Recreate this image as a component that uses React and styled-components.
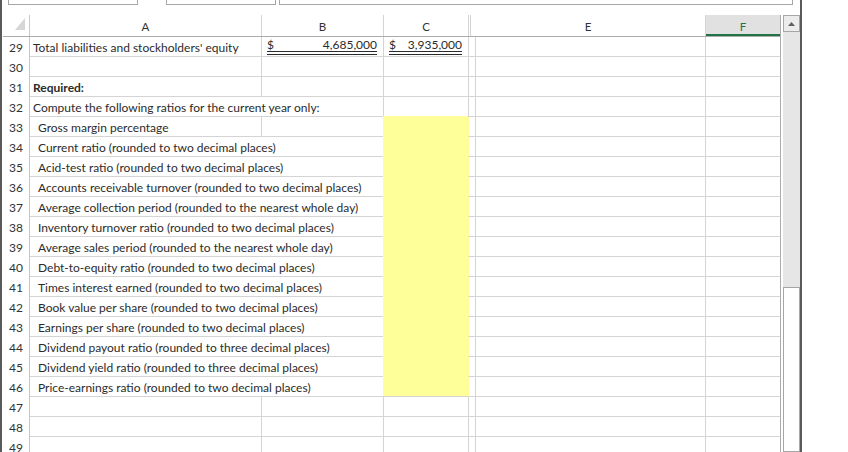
import React from 'react';
import styled, { createGlobalStyle } from 'styled-components';

const GlobalStyle = createGlobalStyle`
  html, body { margin: 0; padding: 0; background: #ffffff; }
  body { font-family: Lato, "Liberation Sans", sans-serif; }
  #root { width: 848px; height: 452px; overflow: hidden; }
`;

const COLS = '27px 232px 122px 85px 2px 235px 75px';
const GRID = '#d4d4d4';
const EDGE = '#ababab';
const YELLOW = '#ffff99';

const Frame = styled.div`
  width: 798px;
  height: 452px;
  border-left: 2px solid #5a5a5a;
  border-right: 2px solid #5a5a5a;
  overflow: hidden;
  display: flex;
  flex-direction: column;
  background: #fff;
`;

const TopBar = styled.div`
  height: 15px;
  flex-shrink: 0;
  display: flex;
  align-items: flex-start;
`;

const InputBox = styled.div`
  box-sizing: border-box;
  height: 5px;
  width: ${(p) => p.$w}px;
  margin-left: ${(p) => p.$ml}px;
  border: 1px solid #a6a6a6;
  border-top: none;
`;

const Body = styled.div`
  flex: 1;
  min-height: 0;
  display: flex;
  gap: 2px;
`;

const Sheet = styled.div`
  margin-left: 1px;
  width: 778px;
  display: flex;
  flex-direction: column;
`;

const HeaderRow = styled.div`
  box-sizing: border-box;
  display: grid;
  grid-template-columns: ${COLS};
  height: 22px;
  border-bottom: 1px solid ${EDGE};
  flex-shrink: 0;
`;

const Corner = styled.div`
  border-right: 1px solid #c8c8c8;
`;

const ColHead = styled.div`
  display: flex;
  align-items: center;
  justify-content: center;
  font-size: 11.5px;
  color: ${(p) => (p.$selected ? '#217346' : '#333')};
  background: ${(p) => (p.$selected ? '#e1e1e1' : 'transparent')};
  box-shadow: ${(p) => (p.$selected ? 'inset 0 -2px 0 #217346' : 'none')};
  border-right: 1px solid ${(p) => (p.$edge ? EDGE : GRID)};
  padding-top: 1px;
`;

const Row = styled.div`
  display: grid;
  grid-template-columns: ${COLS};
  height: 20px;
  flex-shrink: 0;
`;

const RowNum = styled.div`
  display: flex;
  align-items: center;
  justify-content: center;
  font-size: 12px;
  color: #333;
  border-right: 1px solid #c8c8c8;
`;

const Cell = styled.div`
  box-sizing: border-box;
  display: flex;
  align-items: center;
  padding: 1px 3px 0 ${(p) => (p.$indent ? 8 : 3)}px;
  grid-column: ${(p) => (p.$span ? 'span 2' : 'auto')};
  font-size: 12px;
  font-weight: ${(p) => (p.$bold ? 700 : 400)};
  color: #2b2b2b;
  white-space: nowrap;
  background: ${(p) => (p.$fill ? YELLOW : 'transparent')};
  border-right: 1px solid ${(p) => (p.$fill ? YELLOW : p.$edge ? EDGE : GRID)};
  border-bottom: 1px solid ${GRID};
  box-shadow: ${(p) => (p.$fill ? `-1px -1px 0 ${YELLOW}` : 'none')};
`;

const AcctCell = styled(Cell)`
  padding: 0 6px 1px 5px;
  align-items: flex-end;
`;

const Acct = styled.span`
  flex: 1;
  display: flex;
  justify-content: space-between;
  line-height: 12px;
  border-bottom: 4px double #2b2b2b;
`;

const Scrollbar = styled.div`
  width: 17px;
  display: flex;
  flex-direction: column;
`;

const UpButton = styled.div`
  box-sizing: border-box;
  height: 17px;
  border: 1px solid #a6a6a6;
  background: #ececec;
  display: flex;
  align-items: center;
  justify-content: center;
`;

const Track = styled.div`
  height: 255px;
  background: #e6e6e6;
`;

const Thumb = styled.div`
  flex: 1;
  background: #fff;
  border: 1px solid #a6a6a6;
`;

const rows = [
  { n: 29, total: true, a: "Total liabilities and stockholders' equity", b: '4,685,000', c: '3,935,000' },
  { n: 30 },
  { n: 31, a: 'Required:', bold: true },
  { n: 32, a: 'Compute the following ratios for the current year only:', span: true },
  { n: 33, a: 'Gross margin percentage', indent: true, fill: true },
  { n: 34, a: 'Current ratio (rounded to two decimal places)', indent: true, span: true, fill: true },
  { n: 35, a: 'Acid-test ratio (rounded to two decimal places)', indent: true, span: true, fill: true },
  { n: 36, a: 'Accounts receivable turnover (rounded to two decimal places)', indent: true, span: true, fill: true },
  { n: 37, a: 'Average collection period (rounded to the nearest whole day)', indent: true, span: true, fill: true },
  { n: 38, a: 'Inventory turnover ratio (rounded to two decimal places)', indent: true, span: true, fill: true },
  { n: 39, a: 'Average sales period (rounded to the nearest whole day)', indent: true, span: true, fill: true },
  { n: 40, a: 'Debt-to-equity ratio (rounded to two decimal places)', indent: true, span: true, fill: true },
  { n: 41, a: 'Times interest earned (rounded to two decimal places)', indent: true, span: true, fill: true },
  { n: 42, a: 'Book value per share (rounded to two decimal places)', indent: true, span: true, fill: true },
  { n: 43, a: 'Earnings per share (rounded to two decimal places)', indent: true, span: true, fill: true },
  { n: 44, a: 'Dividend payout ratio (rounded to three decimal places)', indent: true, span: true, fill: true },
  { n: 45, a: 'Dividend yield ratio (rounded to three decimal places)', indent: true, span: true, fill: true },
  { n: 46, a: 'Price-earnings ratio (rounded to two decimal places)', indent: true, span: true, fill: true },
  { n: 47 },
  { n: 48 },
  { n: 49 },
];

function SheetRow({ r }) {
  return (
    <Row>
      <RowNum>{r.n}</RowNum>
      <Cell $span={r.span} $indent={r.indent} $bold={r.bold}>{r.a}</Cell>
      {!r.span && (r.total ? (
        <AcctCell><Acct><span>$</span><span>{r.b}</span></Acct></AcctCell>
      ) : <Cell />)}
      {r.total ? (
        <AcctCell><Acct><span>$</span><span>{r.c}</span></Acct></AcctCell>
      ) : <Cell $fill={r.fill} />}
      <Cell />
      <Cell />
      <Cell $edge />
    </Row>
  );
}

export default function App() {
  return (
    <>
      <GlobalStyle />
      <Frame>
        <TopBar>
          <InputBox $ml={6} $w={130} />
          <InputBox $ml={28} $w={110} />
          <InputBox $ml={3} $w={514} />
        </TopBar>
        <Body>
          <Sheet>
            <HeaderRow>
              <Corner>
                <svg width="27" height="21" viewBox="0 0 27 21" style={{ display: 'block' }}>
                  <polygon points="22,3 22,15 12,15" fill="#d6d6d6" />
                </svg>
              </Corner>
              <ColHead>A</ColHead>
              <ColHead>B</ColHead>
              <ColHead>C</ColHead>
              <ColHead />
              <ColHead>E</ColHead>
              <ColHead $selected $edge>F</ColHead>
            </HeaderRow>
            {rows.map((r) => (
              <SheetRow key={r.n} r={r} />
            ))}
          </Sheet>
          <Scrollbar>
            <UpButton>
              <svg width="7" height="4" viewBox="0 0 7 4">
                <polygon points="0,4 7,4 3.5,0" fill="#606060" />
              </svg>
            </UpButton>
            <Track />
            <Thumb />
          </Scrollbar>
        </Body>
      </Frame>
    </>
  );
}
